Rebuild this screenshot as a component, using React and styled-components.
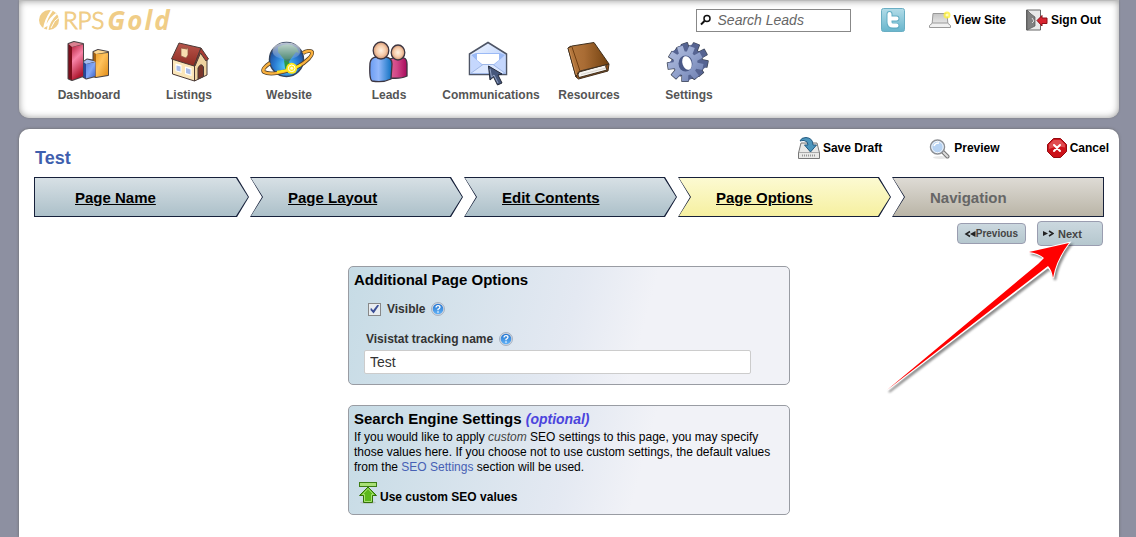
import React from "react";
import styled, { createGlobalStyle } from "styled-components";

const navItems = [
  { label: "Dashboard", Icon: ChartIcon },
  { label: "Listings", Icon: HouseIcon },
  { label: "Website", Icon: GlobeIcon },
  { label: "Leads", Icon: PeopleIcon },
  { label: "Communications", Icon: MailIcon },
  { label: "Resources", Icon: BookIcon },
  { label: "Settings", Icon: GearIcon },
];

const steps = [
  { label: "Page Name" },
  { label: "Page Layout" },
  { label: "Edit Contents" },
  { label: "Page Options", state: "current" },
  { label: "Navigation", state: "disabled" },
];

function App() {
  return (
    <React.Fragment>
      <GlobalStyle />
      <Page>
        <Header>
          <TopRow>
            <Logo href="#">
              <LogoMark />
              <LogoThin>RPS</LogoThin>
              <LogoBold>Gold</LogoBold>
            </Logo>
            <Tools>
              <SearchBox>
                <SearchIcon />
                <SearchInput
                  type="text"
                  aria-label="Search Leads"
                  placeholder="Search Leads"
                />
              </SearchBox>
              <TwitterLink href="#" aria-label="Twitter">
                <TwitterIcon />
              </TwitterLink>
              <IconLink href="#">
                <LaptopIcon />
                View Site
              </IconLink>
              <IconLink href="#">
                <DoorIcon />
                Sign Out
              </IconLink>
            </Tools>
          </TopRow>
          <Nav>
            {navItems.map(({ label, Icon }) => (
              <NavLink href="#" key={label}>
                <Icon />
                {label}
              </NavLink>
            ))}
          </Nav>
        </Header>
        <Main>
          <PageHead>
            <Title>Test</Title>
            <Actions>
              <IconButton type="button">
                <DiskIcon />
                Save Draft
              </IconButton>
              <IconButton type="button">
                <LensIcon />
                Preview
              </IconButton>
              <IconButton type="button">
                <StopIcon />
                Cancel
              </IconButton>
            </Actions>
          </PageHead>
          <Steps>
            {steps.map(({ label, state }) => (
              <Step key={label}>
                <StepFill $state={state}>
                  {state === "disabled" ? (
                    <span>{label}</span>
                  ) : (
                    <a href="#">{label}</a>
                  )}
                </StepFill>
              </Step>
            ))}
          </Steps>
          <Pager>
            <PagerButton type="button">
              <PreviousIcon />
              Previous
            </PagerButton>
            <NextWrap>
              <NextButton type="button">
                <NextIcon />
                Next
              </NextButton>
              <Pointer viewBox="0 0 200 170" aria-hidden="true">
                <path
                  d="M189 11L149 20Q158 21 164 26L7 158L168 35Q172 38 173 46Q176 28 189 11Z"
                  fill="#fff"
                  stroke="#fff"
                  strokeWidth="2"
                />
                <path
                  d="M189 11L149 20Q158 21 164 26L158 32L7 158L168 34Q172 38 173 46Q176 28 189 11Z"
                  fill="#f00"
                />
              </Pointer>
            </NextWrap>
          </Pager>
          <Panel>
            <PanelTitle>Additional Page Options</PanelTitle>
            <CheckRow>
              <Checkbox type="checkbox" id="visible" defaultChecked />
              <Label htmlFor="visible">Visible</Label>
              <HelpIcon />
            </CheckRow>
            <FieldRow>
              <Label htmlFor="tracking">Visistat tracking name</Label>
              <HelpIcon />
            </FieldRow>
            <TextInput type="text" id="tracking" defaultValue="Test" />
          </Panel>
          <Panel>
            <PanelTitle>
              Search Engine Settings <em>(optional)</em>
            </PanelTitle>
            <Text>
              If you would like to apply <em>custom</em> SEO settings to this
              page, you may specify those values here. If you choose not to use
              custom settings, the default values from the{" "}
              <a href="#">SEO Settings</a> section will be used.
            </Text>
            <SeoButton type="button">
              <UploadIcon />
              Use custom SEO values
            </SeoButton>
          </Panel>
        </Main>
      </Page>
    </React.Fragment>
  );
}

/* Navigation icons, 48 x 48 */

function ChartIcon() {
  return (
    <NavSvg viewBox="0 0 48 48">
      <defs>
        <linearGradient id="barRed" x1="0" y1="0" x2=".3" y2="1">
          <stop offset="0" stopColor="#b8203c" />
          <stop offset=".45" stopColor="#f884a8" />
          <stop offset="1" stopColor="#b0182f" />
        </linearGradient>
        <linearGradient id="barBlue" x1="0" y1="0" x2="1" y2="1">
          <stop offset="0" stopColor="#5a82e0" />
          <stop offset=".5" stopColor="#82a6f5" />
          <stop offset="1" stopColor="#3a5fc0" />
        </linearGradient>
        <linearGradient id="barGold" x1="0" y1="0" x2="1" y2="1">
          <stop offset="0" stopColor="#f0a32c" />
          <stop offset=".4" stopColor="#ffc25c" />
          <stop offset="1" stopColor="#e08c18" />
        </linearGradient>
      </defs>
      <g fill="#333" stroke="#4a4446" strokeWidth="2" strokeLinejoin="round">
        <path d="M28.500 13L33 11L43 13V36L31 38L28.500 37Z" />
        <path d="M18.500 23L22 20.500L30.500 22V37L21 39.500L18.500 38Z" />
        <path d="M3.500 5L9 3L18 5V37L7 41L3.500 39.500Z" />
      </g>
      <path d="M28.500 13L31 15V38L28.500 37Z" fill="#a8630e" />
      <path d="M31 15L43 14V36L31 38Z" fill="url(#barGold)" />
      <path d="M28.500 13L33 11L43 13L31 15Z" fill="#ffd890" />
      <path d="M18.500 23L21 25V39.500L18.500 38Z" fill="#27479c" />
      <path d="M21 25L30.500 23V37L21 39.500Z" fill="url(#barBlue)" />
      <path d="M18.500 23L22 20.500L30.500 22.500L21 25Z" fill="#a3bcf3" />
      <path d="M3.500 5L7 8V41L3.500 39.500Z" fill="#7c0f1c" />
      <path d="M7 8L18 5.500V37L7 41Z" fill="url(#barRed)" />
      <path d="M3.500 5L9 3L18 5L7 8Z" fill="#dc8090" />
    </NavSvg>
  );
}

function HouseIcon() {
  return (
    <NavSvg viewBox="0 0 48 48">
      <defs>
        <linearGradient id="roof" x1="0" y1="0" x2="0" y2="1">
          <stop offset="0" stopColor="#b9564c" />
          <stop offset="1" stopColor="#8e2b22" />
        </linearGradient>
      </defs>
      <g stroke="#4b3a36" strokeLinejoin="round">
        <path d="M7.500 19V35L29.500 42V25Z" fill="#fbe6b9" />
        <path d="M29.500 42V24L36 12L42 20V36Z" fill="#efd3a0" />
        <path d="M14 4L36 9L29 27L6.500 20Z" fill="url(#roof)" />
        <path d="M36 9L43.500 20L41 22L35.500 14L30 27H29Z" fill="#a83c32" />
        <path d="M33 40V29Q36 23 38.500 28V37.500Z" fill="#79362b" />
      </g>
      <path d="M16 9H23V16L21 19L16 17Z" fill="#f8ddb0" stroke="#8b5140" strokeWidth=".7" />
      <path d="M16.500 9.500L18 8.500H23L22 10.500Z" fill="#a3604a" />
      <path d="M10.500 24.500L16.500 26V34L10.500 32Z" fill="#fff" />
      <path d="M11.500 26.500L15.500 27.500V32.500L11.500 31.500Z" fill="#a9bce8" />
      <path d="M20 27.500L26.500 29V37L20 35Z" fill="#fff" />
      <path d="M21 29L25.500 30.500V35.500L21 34Z" fill="#a9bce8" />
    </NavSvg>
  );
}

function GlobeIcon() {
  return (
    <NavSvg viewBox="0 0 48 48">
      <defs>
        <radialGradient id="sea" cx=".5" cy=".7" r=".65">
          <stop offset="0" stopColor="#58d3ff" />
          <stop offset=".55" stopColor="#2a7bd2" />
          <stop offset="1" stopColor="#1c4288" />
        </radialGradient>
        <linearGradient id="shine" x1="0" y1="0" x2="0" y2="1">
          <stop offset="0" stopColor="#fff" stopOpacity=".7" />
          <stop offset="1" stopColor="#fff" stopOpacity=".1" />
        </linearGradient>
      </defs>
      <circle cx="21.500" cy="20.500" r="17" fill="url(#sea)" stroke="#33445f" strokeWidth="1.500" />
      <path
        d="M13 8Q20 4 27 6L32 9L34 14L31 13L28 17L25 21L23 25L17 18L13 13Z"
        fill="#3f7f68"
      />
      <path d="M19 21L25 24L28 27L23 34L20 29Z" fill="#2c9a44" />
      <ellipse cx="21.500" cy="12" rx="14" ry="8.500" fill="url(#shine)" />
      <path
        d="M5 24C-1 28 -3 31 -1 33C4 36 20 34 32 28C42 23 48 16 47 13C46 11 41 12 38 14"
        fill="none"
        stroke="#57452b"
        strokeWidth="4"
      />
      <path
        d="M5 24C-1 28 -3 31 -1 33C4 36 20 34 32 28C42 23 48 16 47 13C46 11 41 12 38 14"
        fill="none"
        stroke="#f9b03e"
        strokeWidth="2.500"
      />
      <path d="M12 33Q26 31 36 26" fill="none" stroke="#ffe21f" strokeWidth="2.500" />
      <circle cx="26.700" cy="29.300" r="5.500" fill="#ffe81c" />
      <circle cx="26.700" cy="29.300" r="3.300" fill="none" stroke="#fff" />
      <circle cx="26.700" cy="29.300" r="1.500" fill="#fffbd2" />
    </NavSvg>
  );
}

function PeopleIcon() {
  return (
    <NavSvg viewBox="0 0 48 48">
      <defs>
        <radialGradient id="face" r=".6">
          <stop offset="0" stopColor="#fff2e2" />
          <stop offset=".5" stopColor="#f6caa8" />
          <stop offset="1" stopColor="#c07d58" />
        </radialGradient>
        <linearGradient id="shirt">
          <stop offset="0" stopColor="#6a9cf2" />
          <stop offset=".4" stopColor="#93b8fb" />
          <stop offset="1" stopColor="#0b6fc0" />
        </linearGradient>
        <linearGradient id="dress">
          <stop offset="0" stopColor="#e06093" />
          <stop offset=".4" stopColor="#d04888" />
          <stop offset="1" stopColor="#a80a5c" />
        </linearGradient>
      </defs>
      <g stroke="#3c3540" strokeWidth="1.300">
        <path
          d="M25 20Q33 17 39 19Q42 20 42 25V37Q36 40 25 39Z"
          fill="url(#dress)"
        />
        <ellipse cx="33" cy="13.500" rx="6.800" ry="7.500" fill="url(#face)" />
        <path
          d="M5 24Q6 18 12 18H21Q27 19 27 25L26 40Q18 44 7 42Q4 40 5 24Z"
          fill="url(#shirt)"
        />
        <ellipse cx="16" cy="11.500" rx="7.800" ry="8.500" fill="url(#face)" />
      </g>
    </NavSvg>
  );
}

function MailIcon() {
  return (
    <NavSvg viewBox="0 0 48 48">
      <defs>
        <linearGradient id="flap" x1="0" y1="0" x2="1" y2="1">
          <stop offset="0" stopColor="#f4f8ff" />
          <stop offset="1" stopColor="#aac6fb" />
        </linearGradient>
      </defs>
      <path
        d="M2.500 15L21 3.500L39.500 15V35.500H2.500Z"
        fill="url(#flap)"
        stroke="#4e5566"
        strokeWidth="1.500"
      />
      <path d="M4 16L9 14H33L38 16L28 26H14Z" fill="#9bbaf6" />
      <path d="M10 15H32V21L27 25H15L10 21Z" fill="#fff" />
      <path d="M3.500 16L15 26L3.500 35Z" fill="#c5d7fd" />
      <path d="M38.500 16L27 26L38.500 35Z" fill="#c5d7fd" />
      <path d="M3.500 34.500L16 25.500H26L38.500 34.500Z" fill="#dbe7ff" stroke="#9fb7e6" />
      <path
        d="M21.500 27L23 41L26.500 38L30.500 46L35 44L31 36L35 35Z"
        fill="#46577c"
        stroke="#232938"
      />
      <path d="M23 30L24.500 38L27 36L31 44" fill="none" stroke="#94a3c4" />
    </NavSvg>
  );
}

function BookIcon() {
  return (
    <NavSvg viewBox="0 0 48 48">
      <defs>
        <linearGradient id="cover">
          <stop offset="0" stopColor="#b67a40" />
          <stop offset=".4" stopColor="#a96c34" />
          <stop offset="1" stopColor="#70400f" />
        </linearGradient>
      </defs>
      <g stroke="#40301f" strokeLinejoin="round">
        <path
          d="M3 9L6 7L15 33L44 25L43 32L13.500 40L11 38Z"
          fill="#91511a"
        />
        <path d="M14 33L41 25.500Q40 28 42 31L14 38.500Q12 36 14 33Z" fill="#f6f4f0" />
        <path d="M3 9L7 7L29 3.500L44 25L15 32Q12 33 11 38Z" fill="url(#cover)" />
      </g>
      <path d="M4 9L11.500 36" stroke="#c98b50" />
      <path d="M7 8L15 32" stroke="#6f3e12" />
      <path d="M16 35.500L41 29" stroke="#cbc7c0" strokeWidth=".7" />
    </NavSvg>
  );
}

// closed outline of a nine-toothed wheel
function gearPath(cx, cy) {
  const points = [];
  for (let i = 0; i < 9; i++) {
    const mid = (i * Math.PI * 2) / 9 + 0.2;
    [
      [-0.26, 12],
      [-0.17, 18],
      [0.17, 18],
      [0.26, 12],
    ].forEach(([turn, r]) => {
      const x = cx + Math.cos(mid + turn) * r;
      const y = cy + Math.sin(mid + turn) * r;
      points.push(`${x.toFixed(1)} ${y.toFixed(1)}`);
    });
  }
  return `M${points.join("L")}Z`;
}

function GearIcon() {
  return (
    <NavSvg viewBox="0 0 48 48">
      <defs>
        <linearGradient id="gear" x1="0" y1="0" x2="1" y2="1">
          <stop offset="0" stopColor="#b4c0e0" />
          <stop offset=".5" stopColor="#93a3cd" />
          <stop offset="1" stopColor="#6b7cae" />
        </linearGradient>
      </defs>
      <g stroke="#3f4657" strokeWidth="1.500" strokeLinejoin="round">
        <path d={gearPath(25, 21.5)} />
        <path d={gearPath(20.5, 24.5)} />
      </g>
      <g fill="#566492">
        {[25, 24, 23, 22, 21].map((x) => (
          <path key={x} d={gearPath(x, 38.2 - x * 0.67)} />
        ))}
      </g>
      <path d={gearPath(20.5, 24.5)} fill="url(#gear)" />
      <ellipse cx="20.500" cy="24.500" rx="7" ry="8" fill="#4a5987" />
      <ellipse
        cx="22"
        cy="24"
        rx="4.500"
        ry="7"
        fill="#fff"
        transform="rotate(-18 22 24)"
      />
    </NavSvg>
  );
}

/* Small icons */

function LogoMark() {
  return (
    <svg width="22" height="22" viewBox="0 0 22 22">
      <circle cx="10" cy="11" r="10" fill="#f0cd87" />
      <path
        d="M4 20Q5 11 12 1L14 1.500Q8 10 7.500 15Q11 8 17 4L18 5.500Q11 12 9.500 21L8 21Q8 19 8.500 17Q6 18 4 20Z"
        fill="#fff"
      />
      <path d="M12 19Q15 11 20 8.500" fill="none" stroke="#fff" />
    </svg>
  );
}

function SearchIcon() {
  return (
    <svg width="12" height="12" viewBox="0 0 12 12" fill="none" stroke="#111">
      <circle cx="7" cy="4.500" r="3" strokeWidth="1.500" />
      <path d="M4.500 7L1 10.500" strokeWidth="2" />
    </svg>
  );
}

function TwitterIcon() {
  return (
    <svg width="24" height="24" viewBox="0 0 24 24">
      <defs>
        <linearGradient id="bird" x1="0" y1="0" x2="0" y2="1">
          <stop offset="0" stopColor="#b2dce8" />
          <stop offset="1" stopColor="#68b5cc" />
        </linearGradient>
      </defs>
      <rect x=".5" y=".5" width="23" height="23" rx="2" fill="url(#bird)" stroke="#6aaec3" />
      <path
        d="M8.500 6V14Q8.500 18 12 18H15.500M8.500 10.500H15.500"
        fill="none"
        stroke="#62adc4"
        strokeWidth="6"
        strokeLinecap="round"
      />
      <path
        d="M8.500 6V14Q8.500 17.500 12 17.500H15.500M8.500 10.500H15.500"
        fill="none"
        stroke="#fff"
        strokeWidth="4"
        strokeLinecap="round"
      />
    </svg>
  );
}

function LaptopIcon() {
  return (
    <svg width="22" height="22" viewBox="0 0 22 22">
      <defs>
        <linearGradient id="lid" x1="0" y1="0" x2="0" y2="1">
          <stop offset="0" stopColor="#c4c4c4" />
          <stop offset="1" stopColor="#ececec" />
        </linearGradient>
      </defs>
      <path d="M3 16L4 4.500H18L19 16Z" fill="url(#lid)" stroke="#999" />
      <path d="M3.500 14H18.500L21.500 16.500V18.500H.500V16.500Z" fill="#f1f1f1" stroke="#999" />
      <circle cx="18" cy="6" r="3.500" fill="#fff13a" opacity=".8" />
      <circle cx="18" cy="6" r="1.500" fill="#fffbc0" />
    </svg>
  );
}

function DoorIcon() {
  return (
    <svg width="22" height="22" viewBox="0 0 22 22">
      <path d="M.5 1H14.500V21H.5Z" fill="#e9e9e9" stroke="#666" />
      <path d="M1 1L5 5L9 8V17L5 19L1 21Z" fill="#808080" stroke="#555" strokeWidth=".7" />
      <path d="M6 9L8 12L6 14" fill="none" stroke="#ddd" />
      <path d="M11 11.500L16 6.500V9H21V14.500H16V17Z" fill="#d8232f" stroke="#8b1118" />
    </svg>
  );
}

function DiskIcon() {
  return (
    <svg width="22" height="22" viewBox="0 0 22 22">
      <path d="M3 6H19L21.500 16V21.500H.5V16Z" fill="#e9e9e7" stroke="#777" />
      <path d="M1 15.500H21" stroke="#aaa" />
      <path d="M4 18.500H18" stroke="#999" strokeWidth="2" strokeDasharray="1 1" />
      <path
        d="M2 4Q3 .5 8 .5Q15 1 15 8H18.500L12.500 15L6.500 8H10Q10 4 6 3.500Q3.500 3.500 2 4Z"
        fill="#4d96bd"
        stroke="#245b82"
      />
    </svg>
  );
}

function LensIcon() {
  return (
    <svg width="22" height="22" viewBox="0 0 22 22">
      <ellipse cx="12" cy="20.500" rx="8" ry="1.500" fill="#e7e7e7" />
      <path d="M13 14L18.500 19.500" stroke="#777" strokeWidth="4" strokeLinecap="round" />
      <path d="M13.500 14.500L18.500 19.500" stroke="#ddd" strokeWidth="2" strokeLinecap="round" />
      <circle cx="8.500" cy="10" r="7" fill="#b6d2f2" stroke="#8d8f93" strokeWidth="1.500" />
      <circle cx="8.500" cy="10" r="5.700" fill="none" stroke="#f4f7fa" />
      <path d="M5 9Q6 6 10 6" fill="none" stroke="#fff" strokeWidth="1.500" />
    </svg>
  );
}

function StopIcon() {
  return (
    <svg width="20" height="22" viewBox="0 0 20 22">
      <path
        d="M6.500 1.500H13.500L19.500 7.500V14.500L13.500 20.500H6.500L.5 14.500V7.500Z"
        fill="#cc1219"
        stroke="#930a10"
        strokeLinejoin="round"
      />
      <path d="M6.500 3H13.500L18 7.500V10.500Q10 8.500 2 12V7.500Z" fill="#e86467" opacity=".7" />
      <path d="M7 8L13 14M13 8L7 14" stroke="#fff" strokeWidth="2" strokeLinecap="round" />
    </svg>
  );
}

function PreviousIcon() {
  return (
    <svg width="12" height="8" viewBox="0 0 12 8">
      <path d="M6 1.500L2 4L6 6.500" fill="none" stroke="#222" strokeWidth="1.500" />
      <path d="M6 4L11.500 1V7Z" fill="#222" />
    </svg>
  );
}

function NextIcon() {
  return (
    <svg width="12" height="8" viewBox="0 0 12 8">
      <path d="M1 1L6 3.500L1 6Z" fill="#222" />
      <path d="M7 1L11 3.500L7 6" fill="none" stroke="#222" strokeWidth="1.500" />
    </svg>
  );
}

function HelpIcon() {
  return (
    <svg width="14" height="14" viewBox="0 0 14 14">
      <defs>
        <linearGradient id="help" x1="0" y1="0" x2="0" y2="1">
          <stop offset="0" stopColor="#2273cf" />
          <stop offset="1" stopColor="#63b3f7" />
        </linearGradient>
      </defs>
      <circle cx="7" cy="7" r="6.500" fill="#d6dbe2" stroke="#9aa6b8" strokeWidth=".8" />
      <circle cx="7" cy="7" r="5.300" fill="url(#help)" />
      <path
        d="M5 5.500Q5 3.700 7 3.700Q9 3.700 9 5.300Q9 6.300 7 7.300V8.300M7 9.300V10.700"
        fill="none"
        stroke="#fff"
        strokeWidth="1.300"
      />
    </svg>
  );
}

function UploadIcon() {
  return (
    <svg width="20" height="22" viewBox="0 0 20 22">
      <ellipse cx="10" cy="20.500" rx="8" ry="1.500" fill="#b9c4c8" />
      <rect x="1.500" y=".5" width="17" height="4" fill="#a9e077" stroke="#3c7d13" />
      <path
        d="M10 5L18.500 13.500H14.500V20.500H5.500V13.500H1.500Z"
        fill="#5cb81c"
        stroke="#337109"
        strokeLinejoin="round"
      />
      <path d="M10 6.500L15.500 12.500H13.500V19.500H6.500V12.500H4.500Z" fill="none" stroke="#a8e272" />
    </svg>
  );
}

const GlobalStyle = createGlobalStyle`
  * {
    margin: 0;
    padding: 0;
    box-sizing: border-box;
  }
  body {
    background: #8d90a1;
    color: #000;
    font-family: "Liberation Sans", Arial, Helvetica, sans-serif;
    font-size: 12px;
  }
  svg {
    display: block;
    flex-shrink: 0;
  }
`;

const Page = styled.div`
  display: flex;
  flex-direction: column;
  gap: 11px;
  min-height: 100vh;
  padding: 0 17px 0 19px;
`;

const Header = styled.header`
  padding: 7px 18px 15px 20px;
  background: #fff;
  border-top: 1px solid #bbb;
  border-radius: 0 0 10px 10px;
  box-shadow: inset 0 0 7px #999, 0 0 2px #777;
`;

const TopRow = styled.div`
  display: flex;
  align-items: flex-start;
  justify-content: space-between;
`;

const Logo = styled.a`
  display: flex;
  align-items: center;
  height: 24px;
  color: #f0cd87;
  line-height: 24px;
  text-decoration: none;
`;

const LogoThin = styled.span`
  margin-left: 2px;
  font-family: Lato, sans-serif;
  font-size: 24px;
  font-weight: 300;
  -webkit-text-stroke: 1px #f0cd87;
`;

const LogoBold = styled.span`
  margin-left: 3px;
  font-family: "Open Sans", sans-serif;
  font-size: 26px;
  font-style: italic;
  font-weight: 700;
  letter-spacing: 2px;
`;

const Tools = styled.div`
  display: flex;
  align-items: center;
  gap: 20px;
`;

const SearchBox = styled.div`
  display: flex;
  align-items: center;
  gap: 6px;
  width: 155px;
  height: 23px;
  margin-right: 10px;
  padding: 0 3px;
  border: 1px solid #888;
`;

const SearchInput = styled.input`
  width: 100%;
  min-width: 0;
  border: 0;
  outline: 0;
  background: none;
  font-family: inherit;
  font-size: 14px;
  font-style: italic;
  &::placeholder {
    color: #666;
  }
`;

const TwitterLink = styled.a`
  margin-right: 4px;
`;

const IconLink = styled.a`
  display: flex;
  align-items: center;
  gap: 3px;
  color: #000;
  font-size: 12px;
  font-weight: bold;
  text-decoration: none;
`;

const Nav = styled.nav`
  display: grid;
  grid-template-columns: repeat(4, 100px) 104px 92px 108px;
  margin-top: 7px;
`;

const NavLink = styled.a`
  display: flex;
  flex-direction: column;
  align-items: center;
  gap: 1px;
  color: #555;
  font-size: 12px;
  font-weight: bold;
  line-height: 15px;
  text-decoration: none;
`;

const NavSvg = styled.svg`
  width: 48px;
  height: 48px;
  overflow: visible;
`;

const Main = styled.main`
  flex: 1;
  padding-bottom: 22px;
  background: #fff;
  border-radius: 10px 10px 0 0;
  box-shadow: 0 0 3px #666;
`;

const PageHead = styled.div`
  display: flex;
  justify-content: space-between;
  padding: 8px 10px 8px 16px;
`;

const Title = styled.h1`
  padding-top: 10px;
  color: #3f5fae;
  font-size: 18px;
  line-height: 22px;
`;

const Actions = styled.div`
  display: flex;
  align-items: flex-start;
  gap: 47px;
`;

const IconButton = styled.button`
  display: flex;
  align-items: center;
  gap: 3px;
  border: 0;
  background: none;
  color: #000;
  font-family: inherit;
  font-size: 12px;
  font-weight: bold;
  cursor: pointer;
`;

const Steps = styled.ol`
  display: grid;
  grid-template-columns: 215fr 213fr 213fr 213fr 212fr;
  gap: 1px;
  margin: 0 15px;
  list-style: none;
`;

const stepColors = {
  current: "#fcfad2, #f6f0a0",
  disabled: "#dedbd5, #bab5a7",
};

const StepFill = styled.div`
  display: flex;
  align-items: center;
  height: 38px;
  padding-left: 37px;
  background: linear-gradient(${(props) => stepColors[props.$state] || "#d7e0e5, #acc0c9"});
  color: ${(props) => (props.$state === "disabled" ? "#666" : "#000")};
  font-size: 15px;
  font-weight: bold;
  a {
    color: inherit;
  }
`;

// dark arrow shape with the coloured one a pixel inside it
const Step = styled.li`
  padding: 1px;
  background: #16203a;
  &,
  & > ${StepFill} {
    clip-path: polygon(
      0 0,
      calc(100% - 12px) 0,
      100% 50%,
      calc(100% - 12px) 100%,
      0 100%,
      12px 50%
    );
  }
  &:first-child,
  &:first-child > ${StepFill} {
    clip-path: polygon(
      0 0,
      calc(100% - 12px) 0,
      100% 50%,
      calc(100% - 12px) 100%,
      0 100%
    );
  }
  &:first-child > ${StepFill} {
    padding-left: 40px;
  }
  &:last-child,
  &:last-child > ${StepFill} {
    clip-path: polygon(0 0, 100% 0, 100% 100%, 0 100%, 12px 50%);
  }
`;

const Pager = styled.div`
  display: flex;
  align-items: center;
  justify-content: flex-end;
  gap: 11px;
  padding: 4px 16px 0;
`;

const PagerButton = styled.button`
  display: flex;
  align-items: center;
  height: 21px;
  padding: 0 7px 0 6px;
  border: 1px solid #9a9db0;
  border-radius: 4px;
  background: linear-gradient(#cbd8df, #b5c7ce);
  color: #444;
  font-family: inherit;
  font-size: 10px;
  font-weight: bold;
  cursor: pointer;
`;

const NextWrap = styled.div`
  position: relative;
`;

const NextButton = styled(PagerButton)`
  gap: 4px;
  width: 66px;
  height: 25px;
  padding: 0 4px;
  font-size: 11px;
`;

const Pointer = styled.svg`
  position: absolute;
  top: 11px;
  right: 23px;
  width: 200px;
  height: 170px;
  filter: drop-shadow(2px 2px 1px rgba(0, 0, 0, 0.45));
  pointer-events: none;
`;

const Panel = styled.section`
  max-width: 442px;
  margin: 20px auto 0;
  padding: 4px 5px 10px;
  border: 1px solid #999ca3;
  border-radius: 5px;
  background: linear-gradient(105deg, #c6dbe5, #e4e9f2 50%, #f1f2f7 66%);
`;

const PanelTitle = styled.h2`
  font-size: 15px;
  line-height: 18px;
  em {
    color: #4b44dd;
    font-size: 14px;
  }
`;

const CheckRow = styled.div`
  display: flex;
  align-items: center;
  gap: 6px;
  height: 20px;
  margin: 10px 0 10px 14px;
`;

const FieldRow = styled(CheckRow)`
  margin: 0 0 1px 12px;
`;

const Label = styled.label`
  color: #333;
  font-size: 12px;
  font-weight: bold;
`;

const Checkbox = styled.input`
  appearance: none;
  width: 13px;
  height: 13px;
  padding: 1px;
  border: 1px solid #888;
  background: #e8ecf0;
  &:checked::before {
    content: "";
    display: block;
    width: 9px;
    height: 9px;
    background: #3b4f96;
    clip-path: polygon(10% 35%, 35% 65%, 85% 0, 100% 10%, 40% 100%, 5% 60%);
  }
`;

const TextInput = styled.input`
  display: block;
  width: 90%;
  height: 24px;
  margin-left: 10px;
  padding: 0 5px;
  border: 1px solid #ccc;
  border-radius: 2px;
  background: #fff;
  color: #333;
  font-family: inherit;
  font-size: 14px;
`;

const Text = styled.p`
  margin-top: 2px;
  font-size: 12px;
  line-height: 15px;
  em {
    color: #444;
  }
  a {
    color: #4660b4;
    text-decoration: none;
  }
`;

const SeoButton = styled(IconButton)`
  align-items: flex-end;
  gap: 2px;
  margin: 7px 0 0 4px;
`;

export default App;
